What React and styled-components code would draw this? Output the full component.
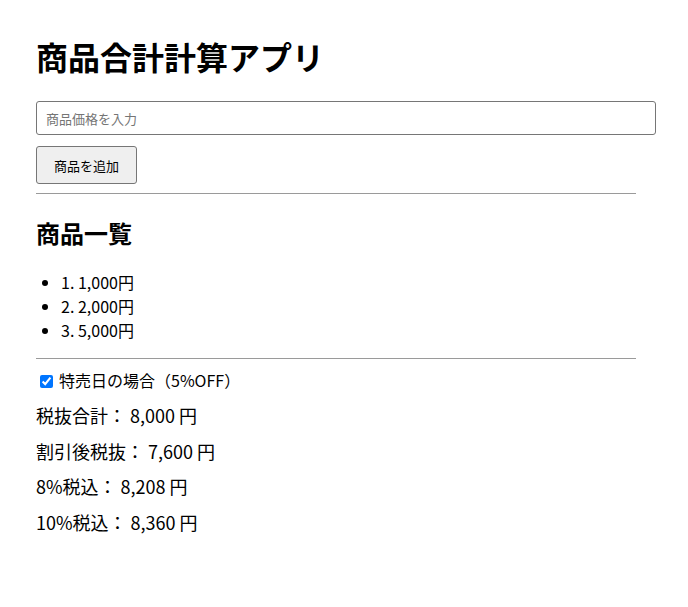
import React, { useState } from "react";
import styled, { createGlobalStyle } from "styled-components";

const GlobalStyle = createGlobalStyle`
  body {
    margin: 0;
    background: #ffffff;
    color: #000000;
    font-family: "Noto Sans CJK JP", "Noto Sans", sans-serif;
  }
`;

const AppContainer = styled.div`
  width: 600px;
  padding: 12px 36px 40px;
`;

const Title = styled.h1`
  font-size: 32px;
  line-height: 46px;
  font-weight: bold;
  margin: 21px 0 22px;
`;

const PriceInput = styled.input`
  display: block;
  box-sizing: border-box;
  width: 620px;
  height: 34px;
  padding: 0 9px;
  font-family: inherit;
  font-size: 13px;
  border: 1px solid #767676;
  border-radius: 3px;
  outline: none;

  &::placeholder {
    color: #757575;
  }
`;

const AddButton = styled.button`
  display: block;
  box-sizing: border-box;
  margin-top: 11px;
  width: 101px;
  height: 38px;
  padding: 0;
  font-family: inherit;
  font-size: 13px;
  color: #000;
  background: #efefef;
  border: 1px solid #767676;
  border-radius: 3px;
`;

const Divider = styled.hr`
  border: none;
  border-top: 1px solid #9a9a9a;
  margin: 9px 0 8px;
`;

const SectionTitle = styled.h2`
  font-size: 24px;
  line-height: 35px;
  font-weight: bold;
  margin: 21px 0 20px;
`;

const ProductList = styled.ul`
  margin: 16px 0;
  padding-left: 25px;
  font-size: 16px;
  line-height: 24px;
`;

const SaleLabel = styled.label`
  display: block;
  margin-top: 10px;
  padding-bottom: 1px;
  font-size: 16px;
  line-height: 23px;

  input {
    margin: 0 6px 0 4px;
    width: 13px;
    height: 13px;
    vertical-align: -1px;
  }
`;

const Summary = styled.p`
  margin: 10px 0;
  font-size: 18px;
  line-height: 25.67px;
`;

const yen = (n) => n.toLocaleString("ja-JP");

export default function App() {
  const [price, setPrice] = useState("");
  const [items, setItems] = useState([1000, 2000, 5000]);
  const [sale, setSale] = useState(true);

  const subtotal = items.reduce((sum, p) => sum + p, 0);
  const discounted = sale ? Math.round(subtotal * 0.95) : subtotal;
  const tax8 = Math.round(discounted * 1.08);
  const tax10 = Math.round(discounted * 1.1);

  const addItem = () => {
    const value = Number(price);
    if (!value) return;
    setItems([...items, value]);
    setPrice("");
  };

  return (
    <AppContainer>
      <GlobalStyle />
      <Title>商品合計計算アプリ</Title>
      <PriceInput
        type="number"
        placeholder="商品価格を入力"
        value={price}
        onChange={(e) => setPrice(e.target.value)}
      />
      <AddButton onClick={addItem}>商品を追加</AddButton>
      <Divider />
      <SectionTitle>商品一覧</SectionTitle>
      <ProductList>
        {items.map((p, i) => (
          <li key={i}>
            {i + 1}. {yen(p)}円
          </li>
        ))}
      </ProductList>
      <Divider />
      <SaleLabel>
        <input
          type="checkbox"
          checked={sale}
          onChange={(e) => setSale(e.target.checked)}
        />
        特売日の場合（5%OFF）
      </SaleLabel>
      <Summary>税抜合計： {yen(subtotal)} 円</Summary>
      <Summary>割引後税抜： {yen(discounted)} 円</Summary>
      <Summary>8%税込： {yen(tax8)} 円</Summary>
      <Summary>10%税込： {yen(tax10)} 円</Summary>
    </AppContainer>
  );
}
